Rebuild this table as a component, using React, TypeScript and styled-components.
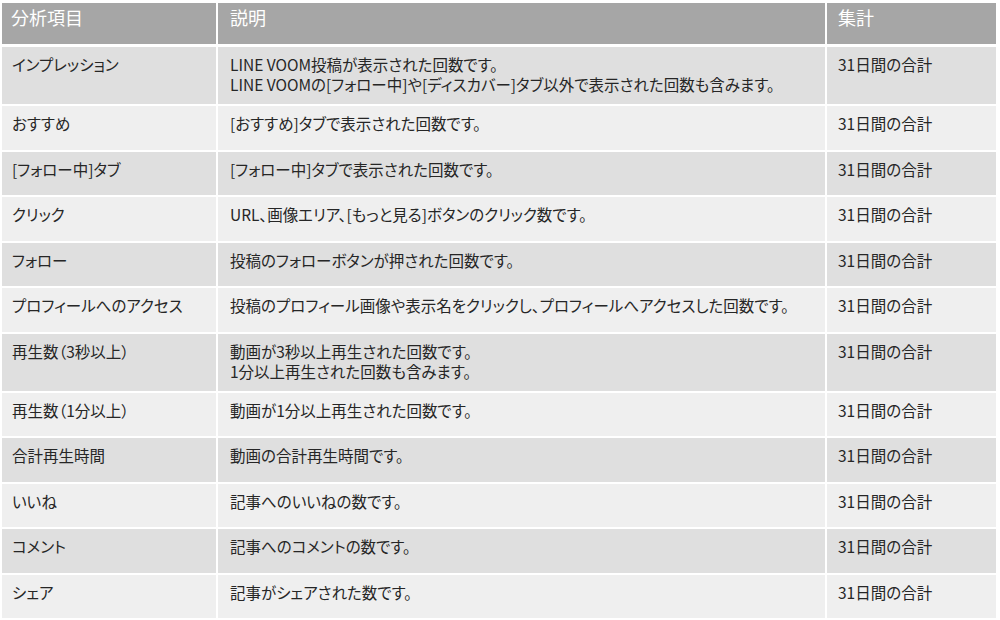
import React from "react";
import styled, { createGlobalStyle } from "styled-components";

type Metric = {
    name: string;
    lines: string[];
    period: string;
};

const metrics: Metric[] = [
    {
        name: "インプレッション",
        lines: [
            "LINE VOOM投稿が表示された回数です。",
            "LINE VOOMの[フォロー中]や[ディスカバー]タブ以外で表示された回数も含みます。",
        ],
        period: "31日間の合計",
    },
    { name: "おすすめ", lines: ["[おすすめ]タブで表示された回数です。"], period: "31日間の合計" },
    { name: "[フォロー中]タブ", lines: ["[フォロー中]タブで表示された回数です。"], period: "31日間の合計" },
    { name: "クリック", lines: ["URL、画像エリア、[もっと見る]ボタンのクリック数です。"], period: "31日間の合計" },
    { name: "フォロー", lines: ["投稿のフォローボタンが押された回数です。"], period: "31日間の合計" },
    {
        name: "プロフィールへのアクセス",
        lines: ["投稿のプロフィール画像や表示名をクリックし、プロフィールへアクセスした回数です。"],
        period: "31日間の合計",
    },
    {
        name: "再生数（3秒以上）",
        lines: ["動画が3秒以上再生された回数です。", "1分以上再生された回数も含みます。"],
        period: "31日間の合計",
    },
    { name: "再生数（1分以上）", lines: ["動画が1分以上再生された回数です。"], period: "31日間の合計" },
    { name: "合計再生時間", lines: ["動画の合計再生時間です。"], period: "31日間の合計" },
    { name: "いいね", lines: ["記事へのいいねの数です。"], period: "31日間の合計" },
    { name: "コメント", lines: ["記事へのコメントの数です。"], period: "31日間の合計" },
    { name: "シェア", lines: ["記事がシェアされた数です。"], period: "31日間の合計" },
];

const App = () => {
    return (
        <>
            <GlobalStyle />
            <Table>
                <HeaderCell>分析項目</HeaderCell>
                <HeaderCell $indent={12}>説明</HeaderCell>
                <HeaderCell $indent={11}>集計</HeaderCell>
                {metrics.map((item, index) => {
                    const shade = index % 2 === 0;
                    const tall = item.lines.length > 1;
                    return (
                        <React.Fragment key={item.name}>
                            <Cell $shade={shade} $tall={tall}>{item.name}</Cell>
                            <Cell $shade={shade} $tall={tall} $indent={12}>
                                {item.lines.map(line => (
                                    <Line key={line}>{line}</Line>
                                ))}
                            </Cell>
                            <Cell $shade={shade} $tall={tall} $indent={11}>{item.period}</Cell>
                        </React.Fragment>
                    );
                })}
            </Table>
        </>
    );
};

const GlobalStyle = createGlobalStyle`
    html, body {
        margin: 0;
        padding: 0;
        background: #ffffff;
    }
    body {
        font-family: "Noto Sans CJK JP", "Noto Sans", sans-serif;
        font-feature-settings: "palt";
    }
`;

/**************** TABLE *************************/
const Table = styled.div`
    display: grid;
    grid-template-columns: 214px 607px 169px;
    column-gap: 2px;
    row-gap: 2px;
    width: 994px;
    padding: 3px 0 0 2px;
`;

const HeaderCell = styled.div<{ $indent?: number }>`
    height: 41px;
    margin-bottom: 1px;
    box-sizing: border-box;
    padding: 2px 0 0 ${p => p.$indent ?? 9}px;
    background: #a6a6a6;
    color: #ffffff;
    font-size: 18px;
    line-height: 24px;
`;

const Cell = styled.div<{ $shade: boolean; $tall: boolean; $indent?: number }>`
    height: ${p => (p.$tall ? 57 : 43.5)}px;
    box-sizing: border-box;
    padding: 7px 0 0 ${p => p.$indent ?? 10}px;
    background: ${p => (p.$shade ? "#dfdfdf" : "#efefef")};
    color: #262626;
    font-size: 15.5px;
    line-height: 20px;
    white-space: nowrap;
    overflow: hidden;
`;

const Line = styled.div``;

export default App;
